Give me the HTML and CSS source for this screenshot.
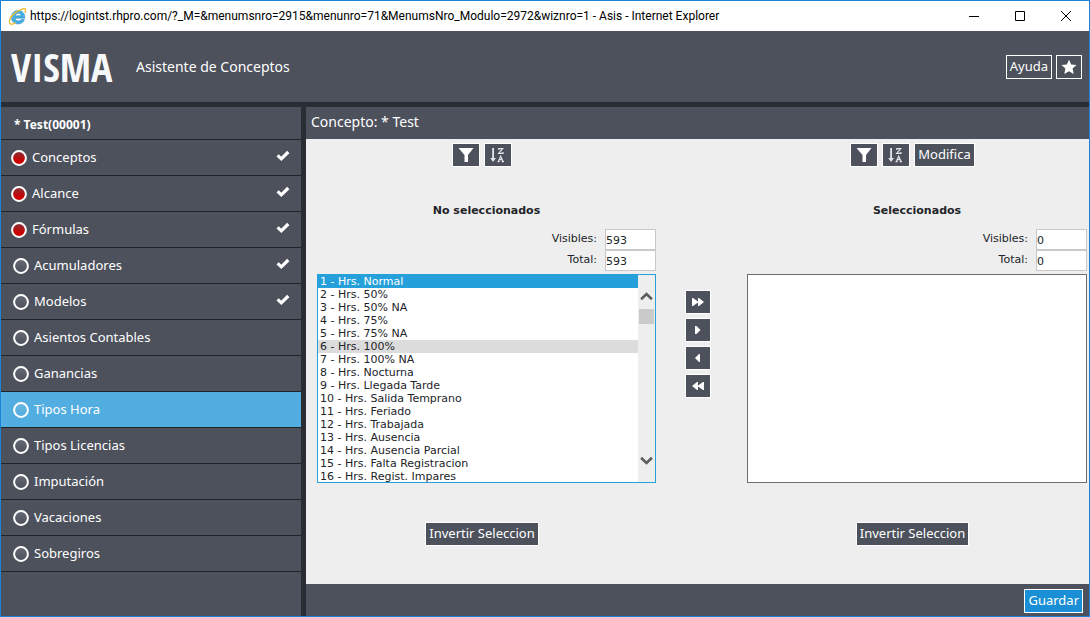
FILE: index.html
```
<!DOCTYPE html>
<html lang="es">
<head>
<meta charset="utf-8">
<title>Asis</title>
<link rel="stylesheet" href="styles.css">
</head>
<body>
<svg class="defs" width="0" height="0" aria-hidden="true">
  <defs>
    <linearGradient id="red" x1="0" y1="0" x2="0" y2="1"><stop offset="0" stop-color="#82343a"/><stop offset=".7" stop-color="#cc0000"/></linearGradient>
    <linearGradient id="pale" x1="0" y1="0" x2="0" y2="1"><stop offset="0" stop-color="#fff" stop-opacity=".14"/><stop offset="1" stop-color="#fff" stop-opacity="0"/></linearGradient>
    <symbol id="full" viewBox="0 0 16 16"><circle cx="8" cy="8" r="6.900" fill="url(#red)" stroke="#fff" stroke-width="2"/></symbol>
    <symbol id="ring" viewBox="0 0 16 16"><circle cx="8" cy="8" r="6.900" fill="url(#pale)" stroke="#fff" stroke-width="2"/></symbol>
    <symbol id="check" viewBox="0 0 14 12"><path d="M1.600 5.300 5.300 8.800 12.300 2" fill="none" stroke="#fff" stroke-width="3.2"/></symbol>
    <symbol id="funnel" viewBox="0 0 16 16"><path d="M0.500 1H15.500L10 8V15H6.500V8Z" fill="#fff"/></symbol>
    <symbol id="sort" viewBox="0 0 16 16"><path d="M2.200 1H4V11H6L3.100 15 .2 11H2.200Z" fill="#e4e5e8"/><path d="M8.800 3V1.600H12.700L8.700 6.400H13V5M8.400 14.500 10.700 9.200 13 14.500M9.200 12.700H12.300M7.500 14.600H9.600M11.800 14.600H14" fill="none" stroke="#e4e5e8" stroke-width="1.200"/></symbol>
  </defs>
</svg>
<div class="window">
  <header class="titlebar">
    <svg class="ie" viewBox="0 0 16 16" aria-hidden="true">
      <path d="M14.800 9.600H5.800C6 11.400 7 12.200 8.700 12.200 10 12.200 11 11.700 11.600 10.900H14.500C13.500 13.600 11.300 15 8.500 15 4.900 15 2.300 12.500 2.300 8.800 2.300 5 4.900 2.300 8.600 2.300 12.700 2.300 15.100 5.200 14.800 9.600ZM5.900 7.300H11.500C11.300 5.700 10.300 4.900 8.700 4.900 7.200 4.900 6.200 5.700 5.900 7.300Z" fill="#47b0e5" stroke="#2585c0" stroke-width=".5"/>
      <path d="M10.500 2C13 .4 15.300.1 15.600 1.600 15.700 2.500 15.400 3.500 15 4.500M2.500 7.500C.6 10.500-.1 13.500 1 14.800 2 15.800 4.300 15 6.300 13.600M2.500 8C5 4.600 8.500 2.500 11.500 1.500" fill="none" stroke="#edbd32" stroke-width="1.300"/>
    </svg>
    <span class="address">https://logintst.rhpro.com/?_M=&amp;menumsnro=2915&amp;menunro=71&amp;MenumsNro_Modulo=2972&amp;wiznro=1 - Asis - Internet Explorer</span>
    <div class="controls">
      <button type="button" aria-label="Minimizar"><svg viewBox="0 0 12 12"><path d="M1 6.500H11"/></svg></button>
      <button type="button" aria-label="Maximizar"><svg viewBox="0 0 12 12"><path d="M1.500 1.500H10.500V10.500H1.500Z"/></svg></button>
      <button type="button" aria-label="Cerrar"><svg viewBox="0 0 12 12"><path d="M1 1 11 11M11 1 1 11"/></svg></button>
    </div>
  </header>
  <div class="banner">
    <span class="logo">VISMA</span>
    <h1>Asistente de Conceptos</h1>
    <div class="actions">
      <button type="button" class="btn">Ayuda</button>
      <button type="button" class="btn star" aria-label="Favoritos"><svg viewBox="0 0 16 16"><path d="M8 .8 10.200 5.500 15.500 6.100 11.600 9.600 12.700 14.900 8 12.300 3.300 14.900 4.400 9.600 .5 6.100 5.800 5.500Z" fill="#fff"/></svg></button>
    </div>
  </div>
  <div class="body">
    <nav class="sidebar">
      <h2>* Test(00001)</h2>
      <a class="item done" href="#"><svg class="dot"><use href="#full"/></svg><span>Conceptos</span><svg class="check"><use href="#check"/></svg></a>
      <a class="item done" href="#"><svg class="dot"><use href="#full"/></svg><span>Alcance</span><svg class="check"><use href="#check"/></svg></a>
      <a class="item done" href="#"><svg class="dot"><use href="#full"/></svg><span>Fórmulas</span><svg class="check"><use href="#check"/></svg></a>
      <a class="item" href="#"><svg class="dot"><use href="#ring"/></svg><span>Acumuladores</span><svg class="check"><use href="#check"/></svg></a>
      <a class="item" href="#"><svg class="dot"><use href="#ring"/></svg><span>Modelos</span><svg class="check"><use href="#check"/></svg></a>
      <a class="item" href="#"><svg class="dot"><use href="#ring"/></svg><span>Asientos Contables</span></a>
      <a class="item" href="#"><svg class="dot"><use href="#ring"/></svg><span>Ganancias</span></a>
      <a class="item active" href="#"><svg class="dot"><use href="#ring"/></svg><span>Tipos Hora</span></a>
      <a class="item" href="#"><svg class="dot"><use href="#ring"/></svg><span>Tipos Licencias</span></a>
      <a class="item" href="#"><svg class="dot"><use href="#ring"/></svg><span>Imputación</span></a>
      <a class="item" href="#"><svg class="dot"><use href="#ring"/></svg><span>Vacaciones</span></a>
      <a class="item" href="#"><svg class="dot"><use href="#ring"/></svg><span>Sobregiros</span></a>
    </nav>
    <main class="main">
      <h2 class="subject">Concepto: * Test</h2>
      <div class="picker">
        <section class="panel">
          <div class="tools">
            <button type="button" class="btn tool" aria-label="Filtrar"><svg><use href="#funnel"/></svg></button>
            <button type="button" class="btn tool" aria-label="Ordenar"><svg><use href="#sort"/></svg></button>
          </div>
          <h3>No seleccionados</h3>
          <div class="counts">
            <label for="v1">Visibles:</label><input id="v1" type="text" value="593">
            <label for="t1">Total:</label><input id="t1" type="text" value="593">
          </div>
          <div class="listbox focused">
            <select multiple size="16" aria-label="No seleccionados">
              <option selected>1 - Hrs. Normal</option>
              <option>2 - Hrs. 50%</option>
              <option>3 - Hrs. 50% NA</option>
              <option>4 - Hrs. 75%</option>
              <option>5 - Hrs. 75% NA</option>
              <option class="hover">6 - Hrs. 100%</option>
              <option>7 - Hrs. 100% NA</option>
              <option>8 - Hrs. Nocturna</option>
              <option>9 - Hrs. Llegada Tarde</option>
              <option>10 - Hrs. Salida Temprano</option>
              <option>11 - Hrs. Feriado</option>
              <option>12 - Hrs. Trabajada</option>
              <option>13 - Hrs. Ausencia</option>
              <option>14 - Hrs. Ausencia Parcial</option>
              <option>15 - Hrs. Falta Registracion</option>
              <option>16 - Hrs. Regist. Impares</option>
            </select>
            <div class="scroll" aria-hidden="true">
              <svg viewBox="0 0 12 8"><path d="M1 6.500 6 1.800 11 6.500"/></svg>
              <div class="thumb"></div>
              <svg class="down" viewBox="0 0 12 8"><path d="M1 1.500 6 6.200 11 1.500"/></svg>
            </div>
          </div>
          <div class="invert"><button type="button" class="btn">Invertir Seleccion</button></div>
        </section>
        <div class="movers">
          <button type="button" class="btn" aria-label="Agregar todos"><svg viewBox="0 0 12 8"><path d="M0 0H1L6 3.500V0H7L12 4 7 8H6V4.500L1 8H0Z"/></svg></button>
          <button type="button" class="btn" aria-label="Agregar"><svg viewBox="0 0 12 8"><path d="M3 0H4.500L8.500 4 4.500 8H3Z"/></svg></button>
          <button type="button" class="btn" aria-label="Quitar"><svg viewBox="0 0 12 8"><path d="M8 0H7L3 4 7 8H8Z"/></svg></button>
          <button type="button" class="btn" aria-label="Quitar todos"><svg viewBox="0 0 12 8"><path d="M12 0H11L6 3.500V0H5L0 4 5 8H6V4.500L11 8H12Z"/></svg></button>
        </div>
        <section class="panel">
          <div class="tools">
            <button type="button" class="btn tool" aria-label="Filtrar"><svg><use href="#funnel"/></svg></button>
            <button type="button" class="btn tool" aria-label="Ordenar"><svg><use href="#sort"/></svg></button>
            <button type="button" class="btn">Modifica</button>
          </div>
          <h3>Seleccionados</h3>
          <div class="counts">
            <label for="v2">Visibles:</label><input id="v2" type="text" value="0">
            <label for="t2">Total:</label><input id="t2" type="text" value="0">
          </div>
          <div class="listbox"><select multiple size="16" aria-label="Seleccionados"></select></div>
          <div class="invert"><button type="button" class="btn">Invertir Seleccion</button></div>
        </section>
      </div>
      <footer class="footer"><button type="button" class="btn save">Guardar</button></footer>
    </main>
  </div>
</div>
</body>
</html>
```
FILE: styles.css
```
* { box-sizing: border-box; }
body { margin: 0; font-family: "Noto Sans", sans-serif; font-size: 13px; color: #222428; }
h1, h2, h3 { margin: 0; font-weight: 400; }
button { font: inherit; margin: 0; padding: 0; cursor: pointer; }
svg { display: block; flex: none; }
.defs { position: absolute; }
.window { display: flex; flex-direction: column; min-height: 100vh; border: 1px solid #1883d7; background: #4d515c; }

.titlebar { display: flex; align-items: center; height: 30px; padding-left: 8px; background: #fff; color: #000; }
.ie { width: 17px; height: 17px; }
.address { margin-left: 4px; font-family: Roboto, sans-serif; font-size: 12px; white-space: nowrap; }
.controls { display: flex; margin-left: auto; }
.controls button { display: flex; align-items: center; justify-content: center; width: 46px; height: 29px; border: 0; background: none; }
.controls svg { width: 12px; height: 12px; fill: none; stroke: #000; stroke-width: 1; }

.banner { display: flex; align-items: center; height: 76px; padding: 0 7px 0 10px; border-bottom: 5px solid #2a2e34; color: #fff; }
.logo { width: 101px; font-family: "Liberation Sans Narrow", "Open Sans Condensed", "Roboto Condensed", sans-serif; font-size: 40px; font-weight: 700; line-height: 40px; color: #f7f8f9; }
.banner h1 { margin-left: 24px; font-size: 14px; }
.actions { display: flex; gap: 4px; margin-left: auto; }

.btn { height: 24px; padding: 0 3px 2px; border: 1px solid #fff; background: #4d515c; color: #fff; line-height: 20px; white-space: nowrap; }
.star { display: flex; align-items: center; justify-content: center; width: 26px; padding: 0; }
.star svg { width: 16px; height: 16px; }

.body { display: flex; flex: 1; }
.sidebar { width: 305px; flex: none; border-right: 5px solid #2a2e34; color: #fff; }
.sidebar h2 { height: 33px; padding-left: 13px; border-bottom: 1px solid #202226; font-size: 12px; font-weight: 700; line-height: 36px; }
.item { display: flex; align-items: center; gap: 5px; height: 36px; padding: 0 11px 0 12px; border-bottom: 1px solid #202226; color: #fff; line-height: 16px; text-decoration: none; }
.item span { padding-bottom: 2px; }
.item.done { gap: 5px; padding-left: 10px; }
.item.active { background: #52ade0; }
.dot { width: 16px; height: 16px; }
.check { width: 14px; height: 12px; margin: 0 0 3px auto; }

.main { display: flex; flex: 1; flex-direction: column; min-width: 0; background: #eee; }
.subject { height: 32px; padding-left: 5px; background: #4d515c; color: #fff; font-size: 14px; line-height: 30px; }
.picker { display: grid; flex: 1; grid-template-columns: 339fr 91px 340fr; padding: 4px 2px 0 11px; }
.tools { display: flex; justify-content: center; gap: 4px; padding-right: 9px; }
.tool { display: flex; align-items: center; justify-content: center; width: 28px; padding: 0; }
.tool svg { width: 16px; height: 16px; }
.panel h3 { margin: 36px 0 10px; font-family: "DejaVu Sans", sans-serif; font-size: 11px; font-weight: 700; line-height: 16px; text-align: center; }
.counts { display: grid; grid-template-columns: 1fr 51px; column-gap: 8px; font-family: "DejaVu Sans", sans-serif; font-size: 11px; }
.counts label { text-align: right; line-height: 20px; }
.counts input { width: 100%; height: 21px; padding: 1px 0 0; border: 1px solid #c8c8c8; background: #fff; font: inherit; color: #222428; }
.listbox { display: flex; height: 209px; margin-top: 3px; border: 1px solid #6e6e6e; background: #fff; }
.focused { border-color: #26a0da; }
.listbox select { flex: 1; min-width: 0; height: 100%; padding: 0; border: 0; outline: 0; border-radius: 0; background: #fff; font-family: "DejaVu Sans", sans-serif; font-size: 11px; color: #222428; overflow: hidden; }
.listbox option { height: 13px; min-height: 13px; padding: 0 2px; line-height: 13px; }
.listbox option:checked { background: linear-gradient(#26a0da, #26a0da); -webkit-text-fill-color: #fff; }
.hover { background: #dcdcdc; }
.scroll { display: flex; flex-direction: column; align-items: center; width: 17px; padding: 17px 0; background: #eee; }
.scroll svg { width: 13px; height: 9px; fill: none; stroke: #5d5d5d; stroke-width: 2.4; }
.thumb { width: 15px; height: 15px; margin-top: 8px; background: #cacaca; }
.scroll .down { margin-top: auto; }
.invert { margin-top: 39px; padding-right: 9px; text-align: center; }
.movers { display: flex; flex-direction: column; align-items: center; gap: 4px; padding: 147px 8px 0 0; }
.movers .btn { display: flex; align-items: center; justify-content: center; width: 26px; padding: 0; }
.movers svg { width: 12px; height: 8px; fill: #fff; }
.footer { display: flex; align-items: center; justify-content: flex-end; height: 32px; padding: 2px 6px 0 0; background: #4d515c; }
.save { background: #1a8fd6; }
```
